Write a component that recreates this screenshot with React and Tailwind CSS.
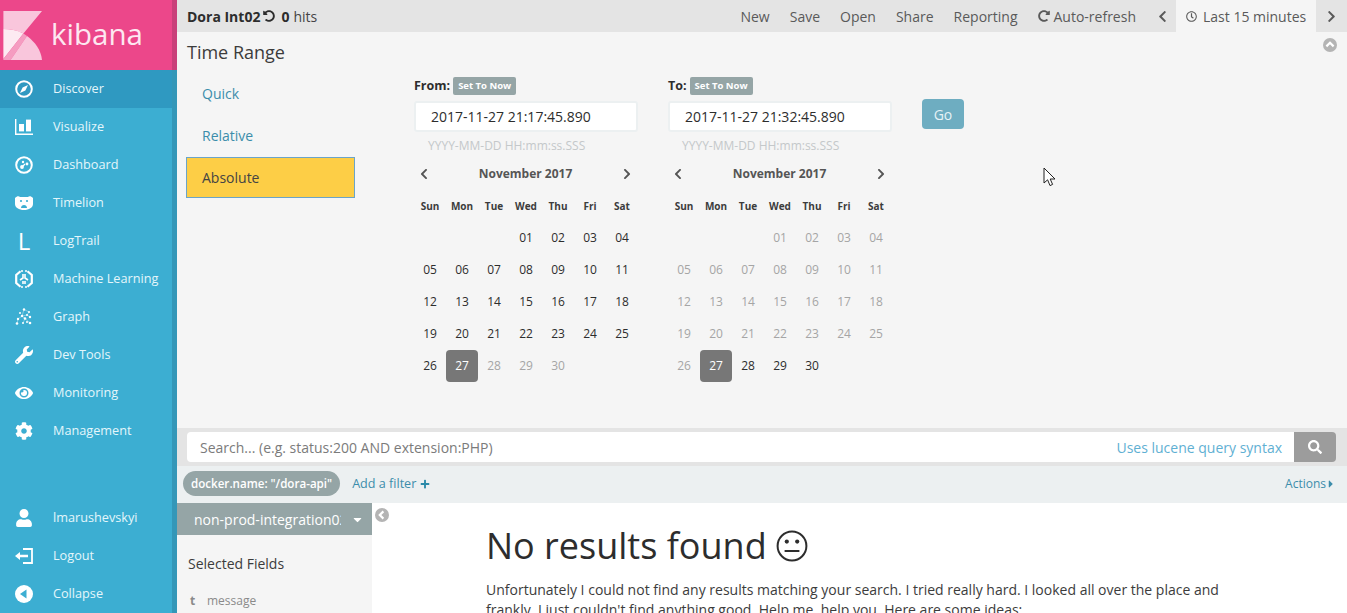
import {
  FaChevronLeft,
  FaChevronRight,
  FaCaretDown,
  FaCaretRight,
  FaPlus,
  FaSearch,
  FaRedoAlt,
  FaUndoAlt,
  FaRegClock,
  FaUser,
  FaEye,
  FaCog,
  FaWrench,
} from "react-icons/fa";

const CompassIcon = () => (
  <svg viewBox="0 0 18 18" className="w-[18px] h-[18px]">
    <circle cx="9" cy="9" r="7.8" fill="none" stroke="white" strokeWidth="2" />
    <path d="M13 5 L10.4 10.4 L5 13 L7.6 7.6 Z" fill="white" />
  </svg>
);

const VisualizeIcon = () => (
  <svg viewBox="0 0 18 16" className="w-[18px] h-[16px]">
    <path d="M0 0h1.4v14.6H18V16H0z" fill="white" />
    <rect x="4" y="5" width="5" height="7.4" fill="white" />
    <rect x="11" y="0.6" width="5" height="11.8" fill="white" />
  </svg>
);

const DashboardIcon = () => (
  <svg viewBox="0 0 18 18" className="w-[18px] h-[18px]">
    <circle cx="9" cy="9" r="7.8" fill="none" stroke="white" strokeWidth="2" />
    <circle cx="7" cy="11" r="1.9" fill="white" />
    <circle cx="12" cy="8" r="1.4" fill="white" />
    <circle cx="8" cy="6" r="1.2" fill="white" />
    <path d="M7 11 L10 8" stroke="white" strokeWidth="1.2" />
  </svg>
);

const TimelionIcon = () => (
  <svg viewBox="0 0 18 14" className="w-[18px] h-[14px]">
    <path
      d="M0 2 C2 -0.2 4 0 5 1 H13 C14 0 16 -0.2 18 2 V8 C18 11.5 14 14 9 14 C4 14 0 11.5 0 8 Z"
      fill="white"
    />
    <circle cx="6" cy="5" r="1.1" fill="#3caed2" />
    <circle cx="12" cy="5" r="1.1" fill="#3caed2" />
    <path d="M6 12 C6 8 12 8 12 12 Z" fill="#3caed2" />
  </svg>
);

const MachineLearningIcon = () => (
  <svg viewBox="0 0 18 18" className="w-[18px] h-[18px]">
    <path
      d="M5.5 1.2 L1.2 5 V13 L5.5 16.8 M12.5 1.2 L16.8 5 V13 L12.5 16.8"
      fill="none"
      stroke="white"
      strokeWidth="2.2"
    />
    <path
      d="M8 1 H6 M10 1 H12 M8 17 H6 M10 17 H12"
      stroke="white"
      strokeWidth="1.6"
    />
    <path
      d="M8 4 V8 L5 10 M10 4 V8 L13 10 M8 14 V11 M10 14 V11"
      fill="none"
      stroke="white"
      strokeWidth="1.6"
    />
  </svg>
);

const graphDots = [
  [9, 1.5, 1.2],
  [14, 4, 1],
  [5, 5, 1],
  [7, 8, 1.2],
  [12, 7, 1],
  [15, 9, 1.2],
  [10, 10.5, 1.3],
  [3, 11, 1.2],
  [2, 15.5, 1.3],
  [15, 15, 1.3],
  [12, 14, 1],
  [8, 15, 1],
];

const GraphIcon = () => (
  <svg viewBox="0 0 18 18" className="w-[18px] h-[18px]">
    <path
      d="M9 1.5 L7 8 L3 11 L2 15.5 M7 8 L12 7 L15 9 M7 8 L10 10.5 L15 15 M10 10.5 L8 15 M9 1.5 L14 4 L12 7"
      stroke="white"
      strokeWidth="0.6"
      opacity="0.6"
      fill="none"
    />
    {graphDots.map(([cx, cy, r]) => (
      <circle key={`${cx}-${cy}`} cx={cx} cy={cy} r={r} fill="white" />
    ))}
  </svg>
);

const LogoutIcon = () => (
  <svg viewBox="0 0 18 16" className="w-[18px] h-[16px]">
    <path d="M8 1 H17 V15 H8" fill="none" stroke="white" strokeWidth="1.8" />
    <path d="M0 8 L5 4 V6.8 H13 V9.2 H5 V12 Z" fill="white" />
  </svg>
);

const CollapseIcon = () => (
  <svg viewBox="0 0 18 18" className="w-[18px] h-[18px]">
    <circle cx="9" cy="9" r="9" fill="white" />
    <path d="M5 9 L11.5 4.5 V13.5 Z" fill="#3caed2" />
  </svg>
);

const NeutralFace = () => (
  <svg viewBox="0 0 32 32" className="w-[32px] h-[32px] inline-block">
    <circle cx="16" cy="16" r="14.4" fill="none" stroke="#2d2d2d" strokeWidth="2" />
    <circle cx="10.8" cy="11.6" r="2.1" fill="#2d2d2d" />
    <circle cx="21.2" cy="11.6" r="2.1" fill="#2d2d2d" />
    <rect x="8.6" y="20" width="14.8" height="2" fill="#2d2d2d" />
  </svg>
);

const CircleChevron = ({ up }) => (
  <svg viewBox="0 0 14 14" className="w-[14px] h-[14px]">
    <circle cx="7" cy="7" r="7" fill="#b4b4b4" />
    <path
      d={up ? "M3.4 8.4 L7 4.8 L10.6 8.4" : "M8.4 3.4 L4.8 7 L8.4 10.6"}
      fill="none"
      stroke="white"
      strokeWidth="2.2"
    />
  </svg>
);

const KibanaLogo = () => (
  <svg viewBox="0 0 43 52" className="w-[43px] h-[52px] shrink-0">
    <path d="M3.4 1 H42 L23.4 23.6 C17 20 10 19 3.4 19 Z" fill="#f9c6dc" />
    <path d="M3.4 19 C10 19 17 20 23.4 23.6 L3.4 49 Z" fill="#fdeaf2" />
    <path d="M3.4 49 L23.4 23.6 L27 26 L10.6 50 H3.4 Z" fill="#f59cc1" />
    <path d="M10.6 50 L27 26 C35 32 41 40 42 50 Z" fill="#f9c6dc" />
  </svg>
);

const navItems = [
  { label: "Discover", icon: <CompassIcon />, active: true },
  { label: "Visualize", icon: <VisualizeIcon /> },
  { label: "Dashboard", icon: <DashboardIcon /> },
  { label: "Timelion", icon: <TimelionIcon /> },
  {
    label: "LogTrail",
    icon: <span className="text-white text-[24px] leading-none">L</span>,
  },
  { label: "Machine Learning", icon: <MachineLearningIcon /> },
  { label: "Graph", icon: <GraphIcon /> },
  { label: "Dev Tools", icon: <FaWrench className="text-white text-[18px]" /> },
  { label: "Monitoring", icon: <FaEye className="text-white text-[18px]" /> },
  { label: "Management", icon: <FaCog className="text-white text-[18px]" /> },
];

const bottomItems = [
  { label: "lmarushevskyi", icon: <FaUser className="text-white text-[18px]" /> },
  { label: "Logout", icon: <LogoutIcon /> },
  { label: "Collapse", icon: <CollapseIcon /> },
];

const NavItem = ({ item }) => (
  <div
    className={`h-[38px] flex items-center shrink-0 ${
      item.active ? "bg-[#2f99c1]" : ""
    }`}
  >
    <div className="w-[53px] pl-[15px] flex items-center">
      <div className="w-[18px] flex justify-center">{item.icon}</div>
    </div>
    <span className="text-[12.7px] text-[#e4f6fb]">{item.label}</span>
  </div>
);

const Sidebar = () => (
  <aside className="w-[177px] shrink-0 h-full flex flex-col bg-[#3caed2] border-r-[5px] border-[#3497b8]">
    <div className="h-[70px] shrink-0 bg-[#ec478a] flex items-center -mr-[5px] border-r-[5px] border-[#c9407a]">
      <div className="pt-[1px] flex items-center">
        <KibanaLogo />
        <span className="ml-[8px] text-[29.5px] leading-none text-[#fde8f1] -mt-[3px]">
          kibana
        </span>
      </div>
    </div>
    {navItems.map((item) => (
      <NavItem key={item.label} item={item} />
    ))}
    <div className="flex-1" />
    {bottomItems.map((item) => (
      <NavItem key={item.label} item={item} />
    ))}
  </aside>
);

const TopBar = () => (
  <div className="h-[32px] shrink-0 bg-[#e4e4e4] flex items-center text-[14px] text-[#5a5a5a]">
    <div className="flex items-center pl-[10px] flex-1 text-[#2d2d2d]">
      <span className="font-bold">Dora Int02</span>
      <FaUndoAlt className="text-[12px] ml-[3px] text-[#2d2d2d]" />
      <span className="font-bold ml-[6px]">0</span>
      <span className="ml-[4px] text-[#444]">hits</span>
    </div>
    <div className="flex items-center gap-[20px]">
      <span>New</span>
      <span>Save</span>
      <span>Open</span>
      <span>Share</span>
      <span>Reporting</span>
      <span className="flex items-center">
        <FaRedoAlt className="text-[12px] mr-[4px]" />
        Auto-refresh
      </span>
    </div>
    <div className="w-[40px] shrink-0 pl-[20px] flex">
      <FaChevronLeft className="text-[13px]" />
    </div>
    <div className="h-full shrink-0 bg-[#f5f5f5] flex items-center pl-[10px] w-[140px]">
      <FaRegClock className="text-[11px] mr-[6px]" />
      <span className="whitespace-nowrap">Last 15 minutes</span>
    </div>
    <div className="w-[31px] shrink-0 flex justify-center">
      <FaChevronRight className="text-[13px]" />
    </div>
  </div>
);

const monthDays = Array.from({ length: 30 }, (_, i) => String(i + 1).padStart(2, "0"));
const weekdays = ["Sun", "Mon", "Tue", "Wed", "Thu", "Fri", "Sat"];

const Calendar = ({ isEnabled }) => (
  <div className="w-[224px]">
    <div className="h-[28px] flex items-center justify-between pl-[4px] pr-[5px] text-[#555]">
      <FaChevronLeft className="text-[12px]" />
      <span className="text-[12px] font-bold">November 2017</span>
      <FaChevronRight className="text-[12px]" />
    </div>
    <div className="grid grid-cols-[repeat(7,32px)] mt-[2px]">
      {weekdays.map((d) => (
        <div
          key={d}
          className="h-[32px] flex items-center justify-center text-[10px] font-bold text-[#3c3c3c]"
        >
          {d}
        </div>
      ))}
      {/* November 2017 starts on a Wednesday */}
      <div className="h-[32px] col-span-3" />
      {monthDays.map((day, i) => {
        const selected = day === "27";
        return (
          <div
            key={day}
            className={`h-[32px] flex items-center justify-center text-[12px] rounded-[4px] ${
              selected
                ? "bg-[#777] text-white"
                : isEnabled(i + 1)
                ? "text-[#2d2d2d]"
                : "text-[#a5a5a5]"
            }`}
          >
            {day}
          </div>
        );
      })}
    </div>
  </div>
);

const DateColumn = ({ label, value, isEnabled }) => (
  <div className="w-[224px] shrink-0">
    <div className="h-[20px] flex items-center">
      <span className="text-[12.5px] font-bold text-[#2d2d2d]">{label}</span>
      <span className="ml-[3px] h-[18px] px-[5px] flex items-center bg-[#95a5a6] rounded-[2px] text-[9.5px] font-bold text-white whitespace-nowrap">
        Set To Now
      </span>
    </div>
    <div className="mt-[5px] w-[224px] h-[31px] bg-white border-2 border-[#ecf0f1] rounded-[3px] flex items-center pl-[15px] text-[14px] text-[#2d2d2d]">
      {value}
    </div>
    <div className="h-[28px] flex items-center pl-[14px] text-[12px] text-[#c4c8ca]">
      YYYY-MM-DD HH:mm:ss.SSS
    </div>
    <Calendar isEnabled={isEnabled} />
  </div>
);

const TimePanel = () => (
  <div className="h-[396px] shrink-0 bg-[#f5f5f5] relative">
    <div className="absolute top-[6px] right-[10px]">
      <CircleChevron up />
    </div>
    <div className="pl-[10px] pt-[7px] text-[18px] leading-[26px] text-[#3c3c3c]">Time Range</div>
    <div className="flex pl-[9px]">
      <div className="w-[169px] shrink-0 pt-[8px] text-[14px] text-[#3c8dab]">
        <div className="h-[40px] flex items-center pl-[16px]">Quick</div>
        <div className="h-[42px] mt-[1px] flex items-center pl-[16px]">Relative</div>
        <div className="h-[41px] mt-[1px] bg-[#fdce46] border border-[#6ba4c8] flex items-center pl-[15px] text-[#444]">
          Absolute
        </div>
      </div>
      <div className="ml-[59px] flex gap-[30px] mt-[11px]">
        <DateColumn label="From:" value="2017-11-27 21:17:45.890" isEnabled={(d) => d <= 27} />
        <DateColumn label="To:" value="2017-11-27 21:32:45.890" isEnabled={(d) => d >= 27} />
        <div className="pt-[23px]">
          <div className="w-[42px] h-[30px] bg-[#6eadc1] rounded-[4px] flex items-center justify-center text-[14px] text-[#e6f2f6]">
            Go
          </div>
        </div>
      </div>
    </div>
    {/* Mouse pointer caught in the screenshot */}
    <svg viewBox="0 0 13 20" className="absolute left-[866px] top-[135px] w-[13px] h-[20px]">
      <path
        d="M1 1 V16 L4.6 12.8 L7 18.6 L9.6 17.4 L7.2 12 H12 Z"
        fill="white"
        stroke="#222"
        strokeWidth="1"
      />
    </svg>
  </div>
);

const SearchBar = () => (
  <div className="h-[38px] shrink-0 bg-[#e4e4e4] pt-[4px] pb-[4px] pr-[11px] pl-[10px] flex">
    <div className="flex-1 bg-white rounded-l-[4px] flex items-center justify-between px-[13px] text-[14px]">
      <span className="text-[#7b7b7b]">Search... (e.g. status:200 AND extension:PHP)</span>
      <span className="text-[#5fb0d3] -mr-[1px]">Uses lucene query syntax</span>
    </div>
    <div className="w-[42px] bg-[#9c9c9c] rounded-r-[4px] flex items-center justify-center">
      <FaSearch className="text-white text-[14px]" />
    </div>
  </div>
);

const FilterBar = () => (
  <div className="h-[37px] shrink-0 bg-[#ecf0f1] flex items-center pb-[2px] pl-[6px] pr-[10px]">
    <span className="h-[25px] px-[8px] bg-[#95a5a6] rounded-full flex items-center text-white font-semibold text-[11.6px]">
      docker.name: "/dora-api"
    </span>
    <span className="ml-[12px] mt-[1px] flex items-center text-[#3c8dab] text-[12.6px]">
      Add a filter
      <FaPlus className="ml-[4px] text-[10px] text-[#2a8aa8]" />
    </span>
    <span className="ml-auto flex items-center text-[#3c8dab] text-[12px]">
      Actions
      <FaCaretRight className="text-[12px] -ml-[1px]" />
    </span>
  </div>
);

const Results = () => (
  <div className="flex-1 flex min-h-0 overflow-hidden">
    <div className="w-[195px] shrink-0 bg-[#f5f5f5]">
      <div className="h-[32px] bg-[#95a5a6] flex items-center pl-[17px] text-white text-[14px]">
        <span className="w-[147px] overflow-hidden whitespace-nowrap">non-prod-integration02</span>
        <FaCaretDown className="text-[13px] ml-[10px]" />
      </div>
      <div className="pl-[11px] pt-[19px] text-[14px] leading-[20px] text-[#3c3c3c]">Selected Fields</div>
      <div className="pl-[13px] mt-[18px] flex items-center text-[12px] text-[#8a8a8a]">
        <span className="font-bold w-[17px]">t</span>
        <span>message</span>
      </div>
    </div>
    <div className="flex-1 bg-white relative">
      <div className="absolute left-[3px] top-[5px]">
        <CircleChevron />
      </div>
      <div className="pl-[114px] pt-[20px] w-[860px]">
        <h1 className="text-[36px] leading-[46px] text-[#2d2d2d] flex items-center">
          No results found
          <span className="ml-[9px] flex">
            <NeutralFace />
          </span>
        </h1>
        <p className="mt-[11px] text-[14px] leading-[20px] text-[#3c3c3c]">
          Unfortunately I could not find any results matching your search. I tried really hard. I
          looked all over the place and frankly, I just couldn't find anything good. Help me, help
          you. Here are some ideas:
        </p>
      </div>
    </div>
  </div>
);

const App = () => {
  return (
    <div className="w-full h-screen flex overflow-hidden bg-white font-['Open_Sans',sans-serif]">
      <Sidebar />
      <main className="flex-1 min-w-0 flex flex-col h-full">
        <TopBar />
        <TimePanel />
        <SearchBar />
        <FilterBar />
        <Results />
      </main>
    </div>
  );
};

export default App;
